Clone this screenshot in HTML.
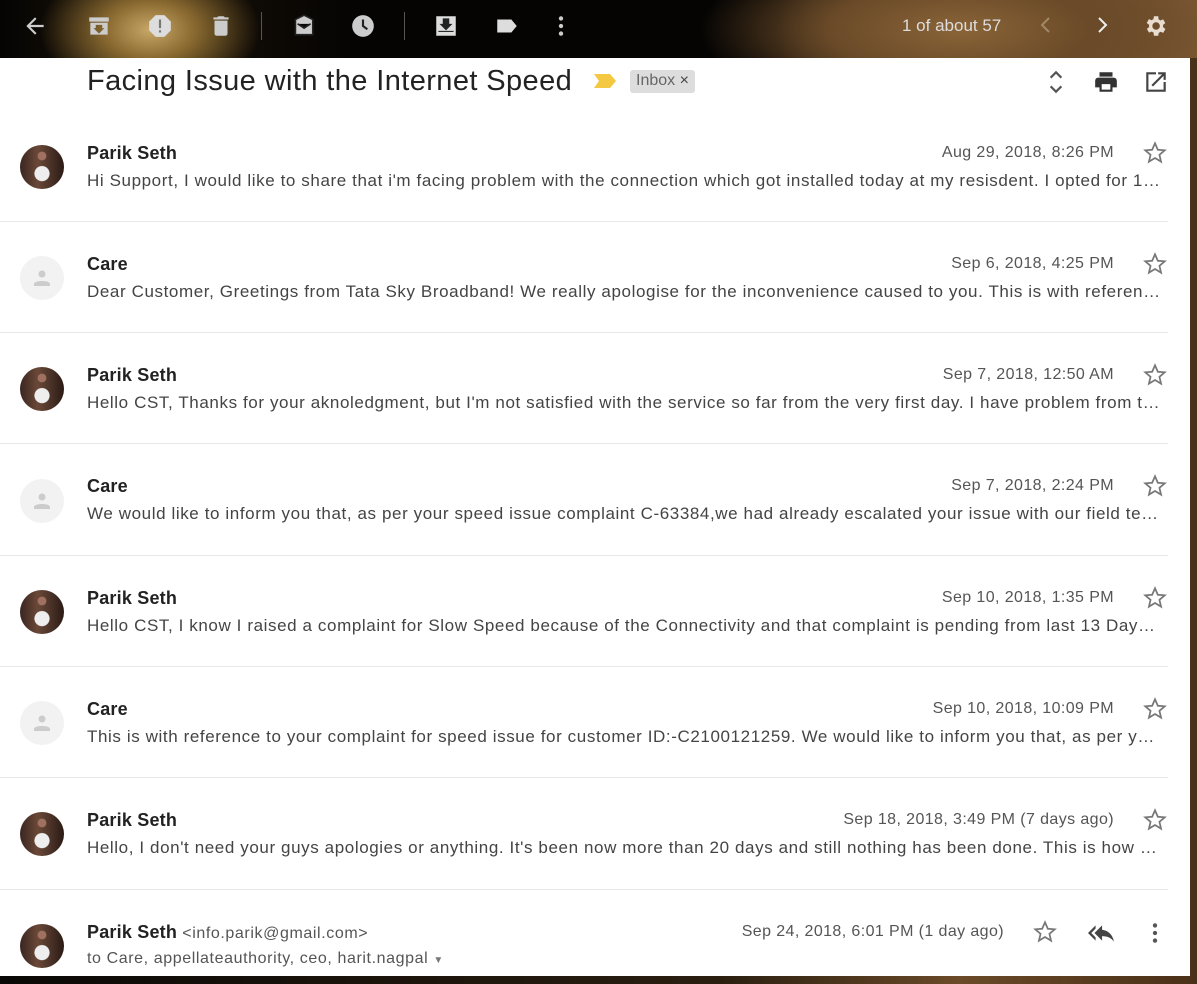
<!DOCTYPE html>
<html><head><meta charset="utf-8"><style>
*{margin:0;padding:0;box-sizing:border-box}
body{width:1197px;height:984px;overflow:hidden;font-family:"Liberation Sans",Arial,sans-serif;position:relative;
background:linear-gradient(90deg,#0a0806 0%,#2a1e10 60%,#6a4a28 80%,#4a3018 100%)}
.top{position:absolute;left:0;top:0;width:1197px;height:58px;
background:radial-gradient(ellipse 110px 70px at 150px 30px,#c8a868 0%,#8a6a30 40%,rgba(20,14,8,0) 100%),
radial-gradient(ellipse 260px 90px at 960px 30px,#8a6438 0%,#6a4a28 50%,rgba(30,20,10,0) 100%),
linear-gradient(90deg,#050403 0%,#1a1208 10%,#050403 30%,#050403 65%,#5a3e22 78%,#7a5632 100%)}
.ic{position:absolute;top:13px}
.panel{position:absolute;left:0;top:58px;width:1190px;height:918px;background:#fff}
.title{position:absolute;left:87px;top:65px;font-size:29px;color:#222;letter-spacing:0.4px}
.tag{position:absolute;left:630px;top:70px;height:23px;background:#ddd;border-radius:3px;color:#666;font-size:16px;padding:2px 6px}
.row{position:absolute;left:0;width:1168px;height:111px;border-bottom:1px solid #e8e8e8}
.av{position:absolute;left:20px;top:15px;width:44px;height:44px;border-radius:50%}
.ps{background:radial-gradient(circle at 50% 65%,#eee 0 20%,transparent 22%),radial-gradient(circle at 50% 25%,#a07060 0 10%,transparent 12%),linear-gradient(90deg,#3a2620,#6a4838 40%,#4a3228 70%,#2a1a14)}
.care{background:#f2f2f2}
.name{position:absolute;left:87px;top:14px;font-size:18px;font-weight:bold;color:#222;letter-spacing:0.2px}
.snip{position:absolute;left:87px;top:42px;width:1075px;font-size:17px;color:#444;white-space:nowrap;overflow:hidden;text-overflow:ellipsis;letter-spacing:0.6px}
.date{position:absolute;right:54px;top:15px;font-size:16px;color:#555;letter-spacing:0.4px}
.star{position:absolute;right:0px;top:10px}
</style></head><body>
<div class="top"></div>
<svg class="ic" style="left:22px" width="26" height="26" viewBox="0 0 24 24"><path d="M20 11H7.8l5.6-5.6L12 4l-8 8 8 8 1.4-1.4L7.8 13H20z" fill="#ccc"/></svg>
<svg class="ic" style="left:86px" width="26" height="26" viewBox="0 0 24 24"><path d="M3 4h18v4H3zM4 9h16v11H4zm5 2v3H7l5 5 5-5h-2v-3z" fill="#ccc"/></svg>
<svg class="ic" style="left:147px" width="26" height="26" viewBox="0 0 24 24"><path d="M8 2h8l6 6v8l-6 6H8l-6-6V8z" fill="#ddd"/><rect x="11" y="6" width="2" height="8" fill="#777"/><rect x="11" y="16" width="2" height="2" fill="#777"/></svg>
<svg class="ic" style="left:208px" width="26" height="26" viewBox="0 0 24 24"><path d="M6 19c0 1.1.9 2 2 2h8c1.1 0 2-.9 2-2V7H6zM19 4h-3.5l-1-1h-5l-1 1H5v2h14z" fill="#ccc"/></svg>
<div style="position:absolute;left:261px;top:12px;width:1px;height:28px;background:#555"></div>
<svg class="ic" style="left:290px" width="26" height="26" viewBox="0 0 24 24"><path d="M5 6l8-4 8 4v14H5zM7 10l6 4 6-4" fill="#ccc" stroke="#222" stroke-width="1.5"/></svg>
<svg class="ic" style="left:350px" width="26" height="26" viewBox="0 0 24 24"><circle cx="12" cy="12" r="10" fill="#ccc"/><path d="M12 6v6l4 3" stroke="#222" stroke-width="2" fill="none"/></svg>
<div style="position:absolute;left:404px;top:12px;width:1px;height:28px;background:#555"></div>
<svg class="ic" style="left:433px" width="26" height="26" viewBox="0 0 24 24"><path d="M3 3h18v18H3z" fill="#ddd"/><path d="M9 5h6v5h3l-6 6-6-6h3z" fill="#222"/><path d="M5 17h14" stroke="#222"/></svg>
<svg class="ic" style="left:494px" width="26" height="26" viewBox="0 0 24 24"><path d="M3 6h13l5 6-5 6H3z" fill="#ddd"/></svg>
<svg class="ic" style="left:548px" width="26" height="26" viewBox="0 0 24 24"><circle cx="12" cy="5" r="2" fill="#ccc"/><circle cx="12" cy="12" r="2" fill="#ccc"/><circle cx="12" cy="19" r="2" fill="#ccc"/></svg>
<div style="position:absolute;left:902px;top:16px;font-size:17px;color:#ddd">1 of about 57</div>
<svg class="ic" style="left:1034px" width="24" height="24" viewBox="0 0 24 24"><path d="M15 5l-7 7 7 7" stroke="#a08868" stroke-width="2" fill="none"/></svg>
<svg class="ic" style="left:1090px" width="24" height="24" viewBox="0 0 24 24"><path d="M9 5l7 7-7 7" stroke="#eee" stroke-width="2" fill="none"/></svg>
<svg class="ic" style="left:1142px" width="26" height="26" viewBox="0 0 24 24"><path d="M19.4 13a7.5 7.5 0 000-2l2.1-1.6-2-3.5-2.5 1a7 7 0 00-1.7-1L15 3h-4l-.4 2.7a7 7 0 00-1.7 1l-2.5-1-2 3.5L6.6 11a7.5 7.5 0 000 2l-2.1 1.6 2 3.5 2.5-1a7 7 0 001.7 1L11 21h4l.4-2.7a7 7 0 001.7-1l2.5 1 2-3.5zM13 15.5a3.5 3.5 0 110-7 3.5 3.5 0 010 7z" fill="#e8ddd0"/></svg>
<div class="panel"></div>
<div class="title">Facing Issue with the Internet Speed</div>
<svg style="position:absolute;left:594px;top:73px" width="24" height="16" viewBox="0 0 24 16"><path d="M0 1h16l6 7-6 7H0l5-7z" fill="#f5c842"/></svg>
<div class="tag">Inbox <span style="color:#444">×</span></div>
<svg style="position:absolute;left:1043px;top:68px" width="26" height="28" viewBox="0 0 24 26"><path d="M7 9l5-5 5 5M7 17l5 5 5-5" stroke="#555" stroke-width="2" fill="none"/></svg>
<svg style="position:absolute;left:1093px;top:69px" width="26" height="26" viewBox="0 0 24 24"><path d="M19 8H5c-1.7 0-3 1.3-3 3v6h4v4h12v-4h4v-6c0-1.7-1.3-3-3-3zm-3 11H8v-5h8zM18 3H6v4h12z" fill="#333"/></svg>
<svg style="position:absolute;left:1143px;top:69px" width="26" height="26" viewBox="0 0 24 24"><path d="M19 19H5V5h7V3H3v18h18v-9h-2zM14 3v2h3.6l-9.8 9.8 1.4 1.4L19 6.4V10h2V3z" fill="#444"/></svg>

<div class="row" style="top:111px"><div class="av ps" style="top:34px"></div><div class="name" style="top:32px">Parik Seth</div><div class="snip" style="top:60px">Hi Support, I would like to share that i'm facing problem with the connection which got installed today at my resisdent. I opted for 100 Mbps plan</div><div class="date" style="top:33px">Aug 29, 2018, 8:26 PM</div><svg class="star" style="top:29px" width="26" height="26" viewBox="0 0 24 24"><path d="M12 3l2.6 6 6.4.5-4.9 4.2 1.5 6.3L12 16.6 6.4 20l1.5-6.3L3 9.5 9.4 9z" fill="none" stroke="#777" stroke-width="1.6"/></svg></div>
<div class="row" style="top:222px"><div class="av care" style="top:34px"><svg width="44" height="44" viewBox="0 0 44 44"><circle cx="22" cy="18" r="3.5" fill="#ccc"/><path d="M14 28c0-4 16-4 16 0v2H14z" fill="#ccc"/></svg></div><div class="name" style="top:32px">Care</div><div class="snip" style="top:60px">Dear Customer, Greetings from Tata Sky Broadband! We really apologise for the inconvenience caused to you. This is with reference to your complaint</div><div class="date" style="top:33px">Sep 6, 2018, 4:25 PM</div><svg class="star" style="top:29px" width="26" height="26" viewBox="0 0 24 24"><path d="M12 3l2.6 6 6.4.5-4.9 4.2 1.5 6.3L12 16.6 6.4 20l1.5-6.3L3 9.5 9.4 9z" fill="none" stroke="#777" stroke-width="1.6"/></svg></div>
<div class="row" style="top:333px"><div class="av ps" style="top:34px"></div><div class="name" style="top:32px">Parik Seth</div><div class="snip" style="top:60px">Hello CST, Thanks for your aknoledgment, but I'm not satisfied with the service so far from the very first day. I have problem from the start</div><div class="date" style="top:33px">Sep 7, 2018, 12:50 AM</div><svg class="star" style="top:29px" width="26" height="26" viewBox="0 0 24 24"><path d="M12 3l2.6 6 6.4.5-4.9 4.2 1.5 6.3L12 16.6 6.4 20l1.5-6.3L3 9.5 9.4 9z" fill="none" stroke="#777" stroke-width="1.6"/></svg></div>
<div class="row" style="top:445px"><div class="av care" style="top:34px"><svg width="44" height="44" viewBox="0 0 44 44"><circle cx="22" cy="18" r="3.5" fill="#ccc"/><path d="M14 28c0-4 16-4 16 0v2H14z" fill="#ccc"/></svg></div><div class="name" style="top:31px">Care</div><div class="snip" style="top:59px">We would like to inform you that, as per your speed issue complaint C-63384,we had already escalated your issue with our field team</div><div class="date" style="top:32px">Sep 7, 2018, 2:24 PM</div><svg class="star" style="top:28px" width="26" height="26" viewBox="0 0 24 24"><path d="M12 3l2.6 6 6.4.5-4.9 4.2 1.5 6.3L12 16.6 6.4 20l1.5-6.3L3 9.5 9.4 9z" fill="none" stroke="#777" stroke-width="1.6"/></svg></div>
<div class="row" style="top:556px"><div class="av ps" style="top:34px"></div><div class="name" style="top:32px">Parik Seth</div><div class="snip" style="top:60px">Hello CST, I know I raised a complaint for Slow Speed because of the Connectivity and that complaint is pending from last 13 Days now</div><div class="date" style="top:33px">Sep 10, 2018, 1:35 PM</div><svg class="star" style="top:29px" width="26" height="26" viewBox="0 0 24 24"><path d="M12 3l2.6 6 6.4.5-4.9 4.2 1.5 6.3L12 16.6 6.4 20l1.5-6.3L3 9.5 9.4 9z" fill="none" stroke="#777" stroke-width="1.6"/></svg></div>
<div class="row" style="top:667px"><div class="av care" style="top:34px"><svg width="44" height="44" viewBox="0 0 44 44"><circle cx="22" cy="18" r="3.5" fill="#ccc"/><path d="M14 28c0-4 16-4 16 0v2H14z" fill="#ccc"/></svg></div><div class="name" style="top:32px">Care</div><div class="snip" style="top:60px">This is with reference to your complaint for speed issue for customer ID:-C2100121259. We would like to inform you that, as per your</div><div class="date" style="top:33px">Sep 10, 2018, 10:09 PM</div><svg class="star" style="top:29px" width="26" height="26" viewBox="0 0 24 24"><path d="M12 3l2.6 6 6.4.5-4.9 4.2 1.5 6.3L12 16.6 6.4 20l1.5-6.3L3 9.5 9.4 9z" fill="none" stroke="#777" stroke-width="1.6"/></svg></div>
<div class="row" style="top:778px;height:112px"><div class="av ps" style="top:34px"></div><div class="name" style="top:32px">Parik Seth</div><div class="snip" style="top:60px">Hello, I don't need your guys apologies or anything. It's been now more than 20 days and still nothing has been done. This is how you treat</div><div class="date" style="top:33px">Sep 18, 2018, 3:49 PM (7 days ago)</div><svg class="star" style="top:29px" width="26" height="26" viewBox="0 0 24 24"><path d="M12 3l2.6 6 6.4.5-4.9 4.2 1.5 6.3L12 16.6 6.4 20l1.5-6.3L3 9.5 9.4 9z" fill="none" stroke="#777" stroke-width="1.6"/></svg></div>
<div class="row" style="top:890px;height:86px;border:none"><div class="av ps" style="top:34px"></div><div class="name" style="top:32px">Parik Seth <span style="font-weight:normal;font-size:16px;color:#555;letter-spacing:0.6px">&lt;info.parik@gmail.com&gt;</span></div><div class="snip" style="top:60px;font-size:16px;color:#555">to Care, appellateauthority, ceo, harit.nagpal <span style="font-size:10px;color:#777">▼</span></div><div class="date" style="top:33px;right:164px">Sep 24, 2018, 6:01 PM (1 day ago)</div><svg style="position:absolute;left:1032px;top:29px" width="26" height="26" viewBox="0 0 24 24"><path d="M12 3l2.6 6 6.4.5-4.9 4.2 1.5 6.3L12 16.6 6.4 20l1.5-6.3L3 9.5 9.4 9z" fill="none" stroke="#777" stroke-width="1.6"/></svg><svg style="position:absolute;left:1088px;top:30px" width="26" height="26" viewBox="0 0 24 24"><path d="M7 8V5l-7 7 7 7v-3l-4-4zm6 1V5l-7 7 7 7v-4.1c5 0 8.5 1.6 11 5.1-1-5-4-10-11-11z" fill="#444"/></svg><svg style="position:absolute;left:1142px;top:30px" width="26" height="26" viewBox="0 0 24 24"><circle cx="12" cy="5" r="2" fill="#555"/><circle cx="12" cy="12" r="2" fill="#555"/><circle cx="12" cy="19" r="2" fill="#555"/></svg></div>
</body></html>
